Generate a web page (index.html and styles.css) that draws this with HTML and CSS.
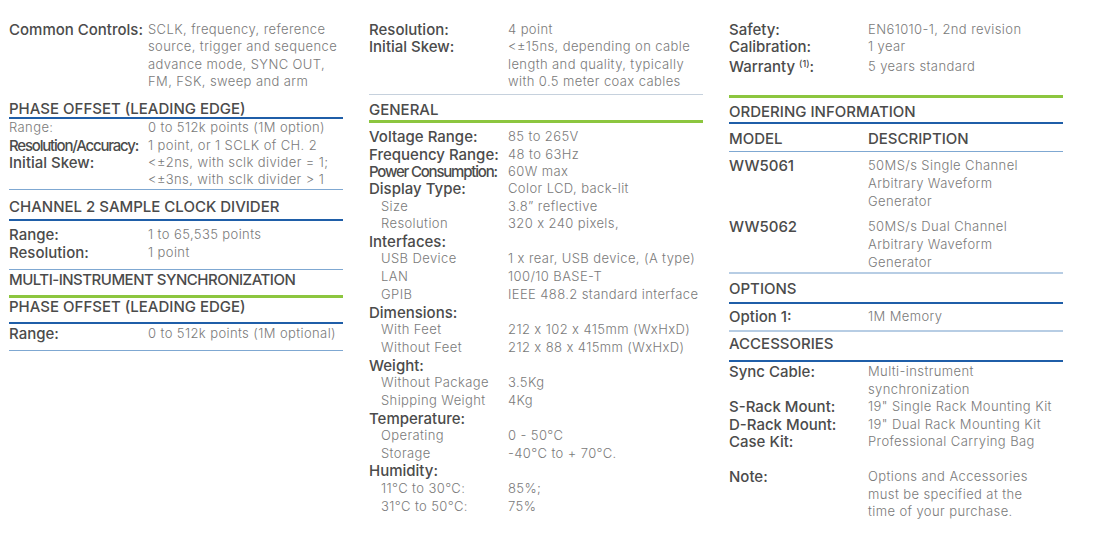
FILE: index.html
```html
<!DOCTYPE html>
<html lang="en">
<head>
<meta charset="utf-8">
<title>Specifications</title>
<link rel="stylesheet" href="styles.css">
</head>
<body>
<div class="page">
  <section class="col">
    <div class="group c1-a">
      <div class="row"><span class="lbl">Common Controls:</span><span class="val">SCLK, frequency, reference<br>source, trigger and sequence<br>advance mode, SYNC OUT,<br>FM, FSK, sweep and arm</span></div>
    </div>
    <h2 class="h c1-h1">Phase Offset (Leading Edge)</h2>
    <div class="group c1-b">
      <div class="row"><span class="val-lbl">Range:</span><span class="val">0 to 512k points (1M option)</span></div>
      <div class="row"><span class="lbl tight">Resolution/Accuracy:</span><span class="val">1 point, or 1 SCLK of CH. 2</span></div>
      <div class="row"><span class="lbl">Initial Skew:</span><span class="val">&lt;±2ns, with sclk divider = 1;<br>&lt;±3ns, with sclk divider &gt; 1</span></div>
    </div>
    <h2 class="h c1-h2">Channel 2 Sample Clock Divider</h2>
    <div class="group c1-c">
      <div class="row"><span class="lbl">Range:</span><span class="val">1 to 65,535 points</span></div>
      <div class="row"><span class="lbl">Resolution:</span><span class="val">1 point</span></div>
    </div>
    <h2 class="h c1-h3">Multi-Instrument Synchronization</h2>
    <h2 class="h c1-h4">Phase Offset (Leading Edge)</h2>
    <div class="group c1-d">
      <div class="row"><span class="lbl">Range:</span><span class="val">0 to 512k points (1M optional)</span></div>
    </div>
  </section>

  <section class="col">
    <div class="group c2-a">
      <div class="row"><span class="lbl">Resolution:</span><span class="val">4 point</span></div>
      <div class="row"><span class="lbl">Initial Skew:</span><span class="val">&lt;±15ns, depending on cable<br>length and quality, typically<br>with 0.5 meter coax cables</span></div>
    </div>
    <h2 class="h c2-h1">General</h2>
    <div class="group c2-b">
      <div class="row"><span class="lbl">Voltage Range:</span><span class="val">85 to 265V</span></div>
      <div class="row"><span class="lbl">Frequency Range:</span><span class="val">48 to 63Hz</span></div>
      <div class="row"><span class="lbl tight">Power Consumption:</span><span class="val">60W max</span></div>
      <div class="row"><span class="lbl">Display Type:</span><span class="val">Color LCD, back-lit</span></div>
      <div class="row sub"><span class="sublbl">Size</span><span class="val">3.8” reflective</span></div>
      <div class="row sub"><span class="sublbl">Resolution</span><span class="val">320 x 240 pixels,</span></div>
      <div class="row"><span class="lbl">Interfaces:</span></div>
      <div class="row sub"><span class="sublbl">USB Device</span><span class="val">1 x rear, USB device, (A type)</span></div>
      <div class="row sub"><span class="sublbl">LAN</span><span class="val">100/10 BASE-T</span></div>
      <div class="row sub"><span class="sublbl">GPIB</span><span class="val">IEEE 488.2 standard interface</span></div>
      <div class="row"><span class="lbl">Dimensions:</span></div>
      <div class="row sub"><span class="sublbl">With Feet</span><span class="val">212 x 102 x 415mm (WxHxD)</span></div>
      <div class="row sub"><span class="sublbl">Without Feet</span><span class="val">212 x 88 x 415mm (WxHxD)</span></div>
      <div class="row"><span class="lbl">Weight:</span></div>
      <div class="row sub"><span class="sublbl">Without Package</span><span class="val">3.5Kg</span></div>
      <div class="row sub"><span class="sublbl">Shipping Weight</span><span class="val">4Kg</span></div>
      <div class="row"><span class="lbl">Temperature:</span></div>
      <div class="row sub"><span class="sublbl">Operating</span><span class="val">0 - 50°C</span></div>
      <div class="row sub"><span class="sublbl">Storage</span><span class="val">-40°C to + 70°C.</span></div>
      <div class="row"><span class="lbl">Humidity:</span></div>
      <div class="row sub"><span class="sublbl">11°C to 30°C:</span><span class="val">85%;</span></div>
      <div class="row sub"><span class="sublbl">31°C to 50°C:</span><span class="val">75%</span></div>
    </div>
  </section>

  <section class="col">
    <div class="group c3-a">
      <div class="row"><span class="lbl">Safety:</span><span class="val">EN61010-1, 2nd revision</span></div>
      <div class="row"><span class="lbl">Calibration:</span><span class="val">1 year</span></div>
      <div class="row warranty"><span class="lbl">Warranty <sup class="sup">(1)</sup>:</span><span class="val">5 years standard</span></div>
    </div>
    <h2 class="h c3-h1">Ordering Information</h2>
    <div class="row h c3-h2"><span>Model</span><span>Description</span></div>
    <div class="group c3-b">
      <div class="row desc"><span class="lbl">WW5061</span><span class="val">50MS/s Single Channel<br>Arbitrary Waveform<br>Generator</span></div>
      <div class="row desc c3-gap"><span class="lbl">WW5062</span><span class="val">50MS/s Dual Channel<br>Arbitrary Waveform<br>Generator</span></div>
    </div>
    <h2 class="h c3-h3">Options</h2>
    <div class="group c3-c">
      <div class="row"><span class="lbl">Option 1:</span><span class="val">1M Memory</span></div>
    </div>
    <h2 class="h c3-h4">Accessories</h2>
    <div class="group c3-d">
      <div class="row acc"><span class="lbl">Sync Cable:</span><span class="val">Multi-instrument<br>synchronization</span></div>
      <div class="row acc"><span class="lbl">S-Rack Mount:</span><span class="val">19" Single Rack Mounting Kit</span></div>
      <div class="row acc"><span class="lbl">D-Rack Mount:</span><span class="val">19" Dual Rack Mounting Kit</span></div>
      <div class="row acc"><span class="lbl">Case Kit:</span><span class="val">Professional Carrying Bag</span></div>
      <div class="row acc note"><span class="lbl">Note:</span><span class="val">Options and Accessories<br>must be specified at the<br>time of your purchase.</span></div>
    </div>
  </section>
</div>
</body>
</html>
```

FILE: styles.css
```css
* { box-sizing: border-box; margin: 0; padding: 0; }

body {
  background: #ffffff;
  font-family: "Inter", "Open Sans", sans-serif;
}

.page {
  display: flex;
  gap: 26px;
  padding: 21px 0 0 9px;
}

.col {
  width: 334px;
  flex: none;
}

.row {
  display: grid;
  grid-template-columns: 139px 1fr;
  line-height: 17.3px;
}

.lbl {
  font-size: 15px;
  font-weight: 500;
  color: #4b4b4b;
  white-space: nowrap;
}

.lbl.tight { letter-spacing: -1.2px; }

.val, .val-lbl, .sublbl {
  font-size: 13px;
  font-weight: 300;
  color: #7a7a7a;
  letter-spacing: 0.4px;
}

.sublbl { padding-left: 12px; white-space: nowrap; }

.sub { line-height: 17.8px; }

.h {
  font-size: 15px;
  font-weight: 500;
  color: #4b4b4b;
  text-transform: uppercase;
  line-height: 18px;
}

/* column 1 */
.c1-h1 { margin-top: 10.3px; line-height: 17px; border-bottom: 2px solid #1f5ea8; }
.c1-b { border-bottom: 1px solid #7fa8d2; }
.c1-h2 { padding-top: 8.3px; padding-bottom: 3px; border-bottom: 2px solid #1f5ea8; }
.c1-c { padding: 5.4px 0 8px; border-bottom: 1px solid #7fa8d2; }
.c1-h3 { padding-top: 1px; padding-bottom: 6px; border-bottom: 3px solid #8cc63f; letter-spacing: -0.5px; }
.c1-h4 { padding-bottom: 6px; border-bottom: 2px solid #1f5ea8; }
.c1-d { padding: 1.4px 0 7px; border-bottom: 1px solid #7fa8d2; }

/* column 2 */
.c2-a { padding-bottom: 3.5px; border-bottom: 1px solid #c6d1dd; }
.c2-h1 { padding-top: 6.3px; padding-bottom: 1.5px; border-bottom: 3px solid #8cc63f; }
.c2-b { padding-top: 4.85px; }

/* column 3 */
.warranty { margin-top: 2.75px; }
.sup { font-size: 9px; vertical-align: 5px; line-height: 0; }
.c3-h1 { margin-top: 19.35px; border-top: 3px solid #8cc63f; padding-top: 5px; padding-bottom: 1px; border-bottom: 2px solid #1f5ea8; }
.c3-h2 { padding-top: 6px; padding-bottom: 3px; line-height: 18px; border-bottom: 1px solid #7fa8d2; }
.c3-b { padding-top: 5.1px; padding-bottom: 0.5px; border-bottom: 2px solid #b7cde4; }
.desc { line-height: 17.8px; }
.c3-gap { margin-top: 7.6px; }
.c3-h3 { padding-top: 6px; padding-bottom: 4px; border-bottom: 2px solid #1f5ea8; }
.c3-c { padding-top: 4.35px; padding-bottom: 4.5px; border-bottom: 2px solid #b7cde4; }
.c3-h4 { padding-top: 3px; padding-bottom: 7px; border-bottom: 2px solid #1f5ea8; }
.c3-d { padding-top: 1.35px; }
.acc { line-height: 17.5px; }
.note { margin-top: 17.5px; }
```
